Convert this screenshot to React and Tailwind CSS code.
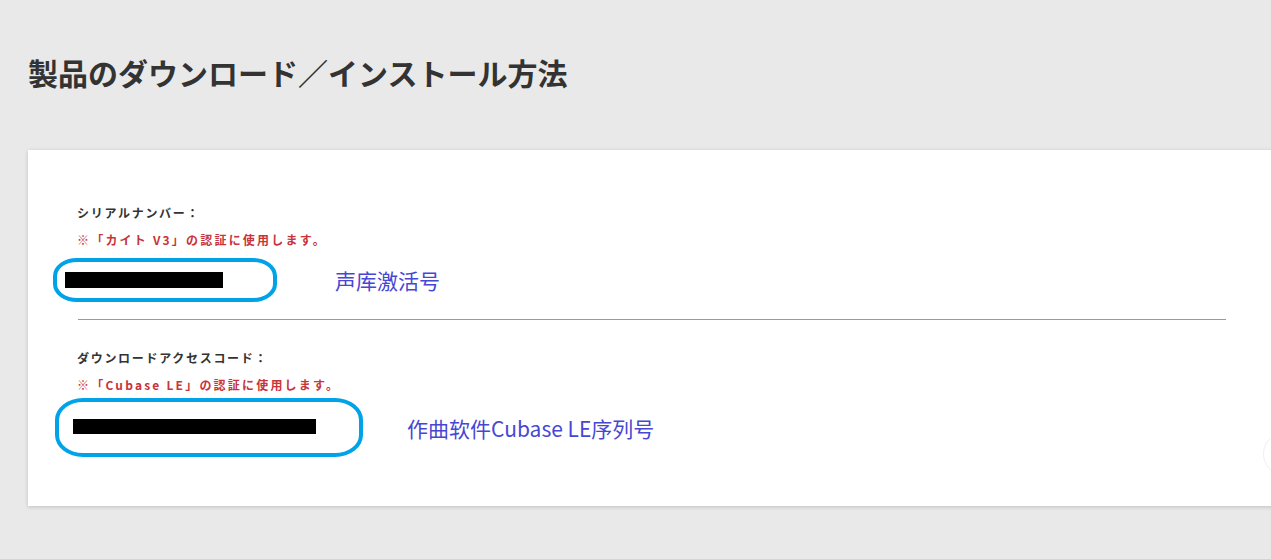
import React from "react";

const jp = { fontFamily: '"Noto Sans CJK JP", "Noto Sans", sans-serif' };
const sc = { fontFamily: '"Noto Sans CJK SC", "Noto Sans", sans-serif' };

export default function App() {
  return (
    <div className="relative min-h-[559px] w-full overflow-hidden bg-[#e9e9e9] pl-[28px]" style={jp}>
      <h1 className="pt-[50px] text-[30px] font-bold leading-[44px] text-[#333333]">
        製品のダウンロード／インストール方法
      </h1>
      <div className="mt-[56px] w-[1248px] bg-white pl-[49px] pr-[50px] pt-[53px] pb-[49px] shadow-[0_1px_4px_rgba(0,0,0,0.18)]">
        <div className="text-[12px] font-bold leading-[20px] tracking-[1.7px] text-[#333333]">シリアルナンバー：</div>
        <div className="mt-[7px] text-[12px] font-bold leading-[20px] tracking-[2.2px] text-[#c8343a]">※「カイト V3」の認証に使用します。</div>
        <div className="mt-[8px] ml-[-24px] flex items-center">
          <div className="h-[44px] w-[224px] rounded-[24px/18px] border-[4px] border-[#00a3e8] pl-[8px] pt-[10px]">
            <div className="h-[16px] w-[158px] bg-black" />
          </div>
          <div className="ml-[58px] text-[21px] leading-[28px] text-[#4747d4]" style={sc}>声库激活号</div>
        </div>
        <div className="mt-[17px] ml-[1px] h-px bg-[#9a9a9a]" />
        <div className="mt-[28px] text-[12px] font-bold leading-[20px] tracking-[1.7px] text-[#333333]">ダウンロードアクセスコード：</div>
        <div className="mt-[7px] text-[12px] font-bold leading-[20px] tracking-[2.2px] text-[#c8343a]">※「Cubase LE」の認証に使用します。</div>
        <div className="mt-[3px] ml-[-22px] flex items-center">
          <div className="h-[59px] w-[308px] rounded-[28px/22px] border-[4px] border-[#00a3e8] pl-[14px] pt-[17px]">
            <div className="h-[15px] w-[243px] bg-black" />
          </div>
          <div className="ml-[44px] text-[21px] leading-[28px] text-[#4747d4]" style={sc}>作曲软件Cubase LE序列号</div>
        </div>
      </div>
      <div className="absolute left-[1263px] top-[432px] h-[44px] w-[44px] rounded-full border border-[#f0f0f0] bg-white" />
    </div>
  );
}
